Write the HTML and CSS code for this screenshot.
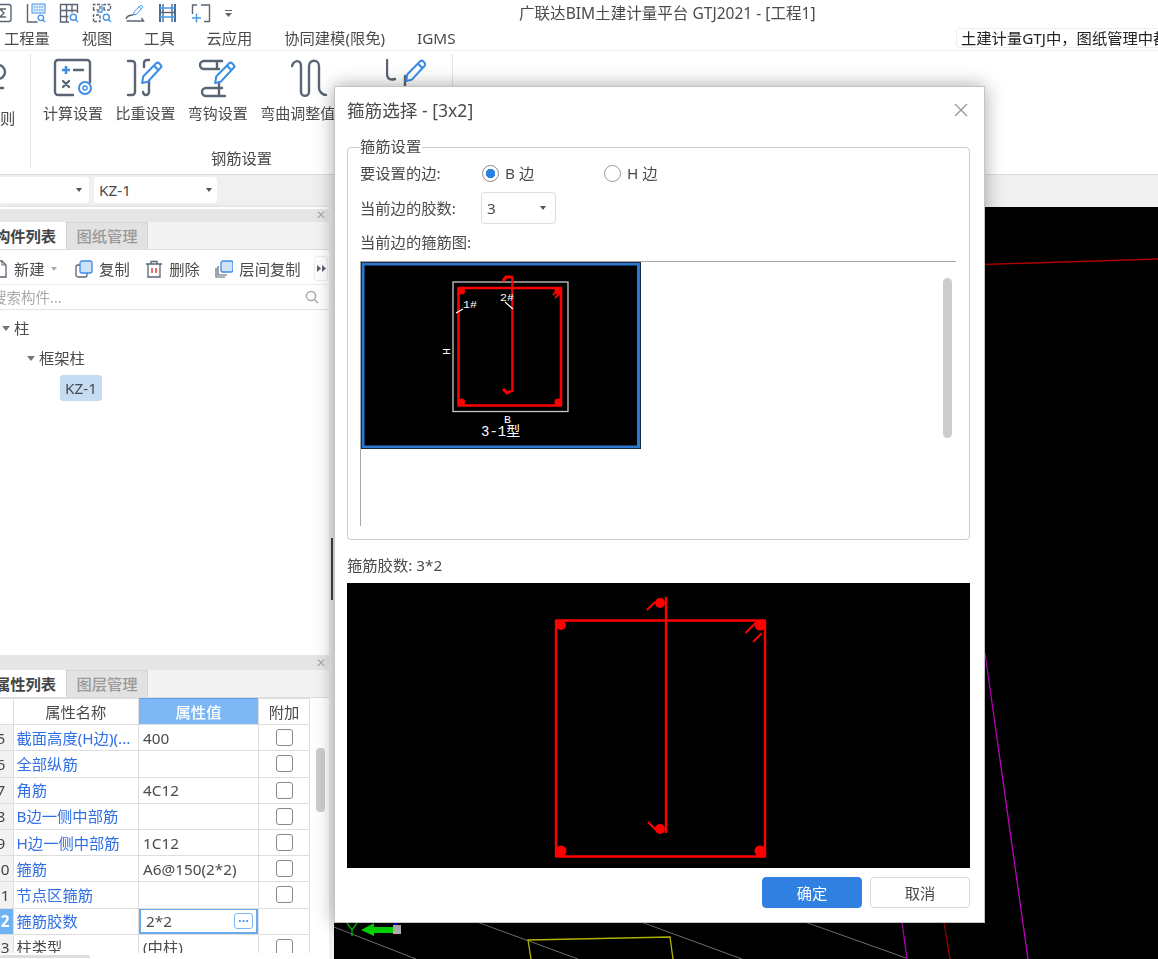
FILE: index.html
```html
<!DOCTYPE html>
<html lang="zh-CN">
<head>
<meta charset="utf-8">
<title>广联达BIM土建计量平台 GTJ2021</title>
<link rel="stylesheet" href="styles.css">
</head>
<body>
<svg class="defs" width="0" height="0" aria-hidden="true">
  <symbol id="pencil" viewBox="0 0 24 24"><path d="M3 22l1.200-6.500L16.500 3.200a2 2 0 0 1 2.800 0l1.500 1.500a2 2 0 0 1 0 2.800L8.500 20.800zM14.500 5.500l4 4" fill="#fff" stroke="#3b8de6" stroke-width="2" stroke-linejoin="round"/></symbol>
  <symbol id="lens" viewBox="0 0 10 10"><circle cx="4.300" cy="4.300" r="3" fill="#fff" stroke="#4a98e6" stroke-width="1.500"/><path d="M6.500 6.500L9 9" stroke="#4a98e6" stroke-width="1.500"/></symbol>
</svg>
<div class="app">
  <header class="titlebar">
    <div class="quick">
      <svg class="qi" viewBox="0 0 20 20"><rect x="1" y="1.500" width="17" height="17" rx="2" class="ln"/><path d="M13 6H7l4 4-4 4h6" class="ln"/></svg>
      <svg class="qi" viewBox="0 0 20 20"><path d="M1.500 1v18h10" class="ln"/><rect x="6" y="1" width="13" height="9" fill="#dbe9f8" stroke="#4a98e6"/><path d="M8 4h9M8 7h9" stroke="#4a98e6" stroke-dasharray="1.500 1"/><use href="#lens" x="11" y="11" width="9" height="9"/></svg>
      <svg class="qi" viewBox="0 0 20 20"><path d="M10 19H1.500V1.500h17V10M1.500 7.500h17M1.500 13.500h8M7.500 1.500v17M13 1.500v8" class="ln"/><use href="#lens" x="10" y="10" width="10" height="10"/></svg>
      <svg class="qi" viewBox="0 0 20 20"><path d="M1.500 7V1.500H8V7zM12 7V1.500h6.500V7zM1.500 18.500V12H8v6.500z" class="ln" stroke-dasharray="3 1.500"/><path d="M10 1v8H5" stroke="#4a98e6" fill="none" stroke-width="1.300"/><use href="#lens" x="10" y="10" width="10" height="10"/></svg>
      <svg class="qi" viewBox="0 0 20 20"><path d="M1 16c1-3 3-4 7-4M1.500 18h17l-2-3" class="ln"/><use href="#pencil" x="7" y="1" width="12" height="12"/></svg>
      <svg class="qi" viewBox="0 0 20 20"><path d="M2 1v18M17 1v18" stroke="#3c6fa8" stroke-width="2" fill="none"/><path d="M5 1v18M14 1v18" class="ln"/><path d="M2 5h15M2 14h15" stroke="#4a98e6" stroke-width="1.500"/><path d="M2 9.500h15" class="ln"/></svg>
      <svg class="qi" viewBox="0 0 20 20"><path d="M10 2h8.500v16.500H13M1.500 11V2H6" class="ln"/><path d="M1 15h9M5.500 10.500v9" stroke="#4a98e6" stroke-width="1.500"/></svg>
      <svg class="more" viewBox="0 0 9 9"><path d="M1 1.500h7" stroke="#666"/><path d="M1 4h7L4.500 8z" fill="#666"/></svg>
    </div>
    <div class="app-title">广联达BIM土建计量平台 GTJ2021 - [工程1]</div>
  </header>

  <nav class="menubar">
    <span>工程量</span><span>视图</span><span>工具</span><span>云应用</span><span>协同建模(限免)</span><span>IGMS</span>
    <div class="helpbox">土建计量GTJ中，图纸管理中都可以导入哪些类型的图纸</div>
  </nav>

  <section class="ribbon">
    <div class="rgroup rgroup-first"><svg class="rclip" viewBox="0 0 10 40"><circle cx="-2" cy="14" r="7" class="ln2"/><path d="M-2 21v9M-2 30H3" class="ln2"/></svg><span class="rlabel">则</span></div>
    <div class="rgroup rgroup-main">
      <div class="rbtns">
        <div class="rbtn">
          <svg class="ricon" viewBox="0 0 40 40"><path d="M20 37H5a3 3 0 0 1-3-3V5a3 3 0 0 1 3-3h29a3 3 0 0 1 3 3v19" class="ln2"/><path d="M9 12h8M13 8v8" stroke="#3b8de6" stroke-width="2.500"/><path d="M21 12h9" class="ln2"/><path d="M10 23l6 6M16 23l-6 6" class="ln2"/><circle cx="32" cy="30" r="6" fill="#fff" stroke="#3b8de6" stroke-width="2"/><circle cx="32" cy="30" r="2" fill="none" stroke="#3b8de6" stroke-width="1.500"/></svg>
          <span class="rlabel">计算设置</span>
        </div>
        <div class="rbtn">
          <svg class="ricon" viewBox="0 0 40 40"><path d="M3 3h4a3 3 0 0 1 3 3v28a3 3 0 0 1-3 3H3M24 2h-2a3 3 0 0 0-3 3v4M24 20v14a3 3 0 0 1-6 0" class="ln2"/><use href="#pencil" x="14" y="2" width="25" height="25"/></svg>
          <span class="rlabel">比重设置</span>
        </div>
        <div class="rbtn">
          <svg class="ricon" viewBox="0 0 40 40"><path d="M24 3H6a3 3 0 0 0 0 8h15M19 3v8M24 30H8a4 4 0 0 0 0 8h19M21 26v12" class="ln2"/><use href="#pencil" x="14" y="2" width="25" height="25"/></svg>
          <span class="rlabel">弯钩设置</span>
        </div>
        <div class="rbtn rbtn-wave">
          <svg class="ricon ricon-wave" viewBox="0 0 40 40"><path d="M1 8c2-6 9-7 9 0v26c0 5 8 5 8 0V8c0-7 10-7 10 0v22c0 4 4 7 7 7" class="ln2"/></svg>
          <span class="rlabel">弯曲调整值</span>
        </div>
        <div class="rbtn rbtn-last">
          <svg class="ricon" viewBox="0 0 40 40"><path d="M1 2v14c0 6 5 6 8 5M19 18v18" class="ln2"/><use href="#pencil" x="17" y="0" width="25" height="25"/></svg>
        </div>
      </div>
      <div class="gname">钢筋设置</div>
    </div>
  </section>

  <div class="selbar">
    <div class="sel sel-a"><i class="caret"></i></div>
    <div class="sel sel-b">KZ-1<i class="caret"></i></div>
  </div>

  <main class="workspace">
    <aside class="leftcol">
      <section class="panel panel-top">
        <div class="strip"><span class="xmark">✕</span></div>
        <div class="tabs"><div class="tab tab-on">构件列表</div><div class="tab">图纸管理</div></div>
        <div class="toolbar">
          <div class="tool"><svg class="ticon" viewBox="0 0 18 18"><path d="M3 1h9l4 4v12H3z" fill="#fff" stroke="#5a6473" stroke-width="1.300"/><path d="M12 1v4h4" fill="none" stroke="#5a6473"/></svg><span>新建</span><i class="caret caret-light"></i></div>
          <div class="tool"><svg class="ticon" viewBox="0 0 18 18"><rect x="1" y="5" width="11" height="12" rx="2" fill="#fff" stroke="#5a6473" stroke-width="1.300"/><rect x="5" y="1" width="12" height="12" rx="2" fill="#cfe2f8" stroke="#3b8de6" stroke-width="1.300"/></svg><span>复制</span></div>
          <div class="tool"><svg class="ticon" viewBox="0 0 18 18"><path d="M1 4h16M6 4V1.500h6V4M3 4v13h12V4" fill="none" stroke="#5a6473" stroke-width="1.300"/><path d="M7 8v5M11 8v5" stroke="#e0413c" stroke-width="1.500"/></svg><span>删除</span></div>
          <div class="tool"><svg class="ticon" viewBox="0 0 18 18"><path d="M1 8v9h9M3 6v9h9" fill="none" stroke="#5a6473" stroke-width="1.200"/><rect x="6" y="1" width="12" height="11" rx="2" fill="#cfe2f8" stroke="#3b8de6" stroke-width="1.300"/></svg><span>层间复制</span></div>
          <div class="expand"><svg viewBox="0 0 9 9" width="9" height="9"><path d="M0 1l4 3.500L0 8zM5 1l4 3.500L5 8z" fill="#5a6473"/></svg></div>
        </div>
        <div class="search"><span>搜索构件...</span><svg viewBox="0 0 14 14" width="14" height="14"><circle cx="6" cy="6" r="4.600" fill="none" stroke="#aaa" stroke-width="1.500"/><path d="M9.500 9.500L13 13" stroke="#aaa" stroke-width="1.500"/></svg></div>
        <div class="tree">
          <div class="node node-1"><i class="tri"></i>柱</div>
          <div class="node node-2"><i class="tri"></i>框架柱</div>
          <div class="node node-3"><span class="chip">KZ-1</span></div>
        </div>
      </section>

      <section class="panel panel-bottom">
        <div class="strip"><span class="xmark">✕</span></div>
        <div class="tabs"><div class="tab tab-on">属性列表</div><div class="tab">图层管理</div></div>
        <div class="tablewrap">
          <table class="props">
            <colgroup><col class="c-n"><col class="c-name"><col class="c-val"><col class="c-add"></colgroup>
            <thead><tr><th></th><th>属性名称</th><th class="th-val">属性值</th><th>附加</th></tr></thead>
            <tbody>
              <tr><td class="num">5</td><td class="pn">截面高度(H边)(...</td><td class="pv">400</td><td class="ck"><i class="box"></i></td></tr>
              <tr><td class="num">6</td><td class="pn">全部纵筋</td><td class="pv"></td><td class="ck"><i class="box"></i></td></tr>
              <tr><td class="num">7</td><td class="pn">角筋</td><td class="pv">4C12</td><td class="ck"><i class="box"></i></td></tr>
              <tr><td class="num">8</td><td class="pn">B边一侧中部筋</td><td class="pv"></td><td class="ck"><i class="box"></i></td></tr>
              <tr><td class="num">9</td><td class="pn">H边一侧中部筋</td><td class="pv">1C12</td><td class="ck"><i class="box"></i></td></tr>
              <tr><td class="num">10</td><td class="pn">箍筋</td><td class="pv">A6@150(2*2)</td><td class="ck"><i class="box"></i></td></tr>
              <tr><td class="num">11</td><td class="pn">节点区箍筋</td><td class="pv"></td><td class="ck"><i class="box"></i></td></tr>
              <tr><td class="num num-on">12</td><td class="pn">箍筋胶数</td><td class="pv pv-edit"><div class="editor"><span>2*2</span><b class="dots">···</b></div></td><td class="ck"></td></tr>
              <tr><td class="num">13</td><td class="pn pn-dark">柱类型</td><td class="pv">(中柱)</td><td class="ck"><i class="box"></i></td></tr>
            </tbody>
          </table>
          <div class="vscroll"><div class="vthumb"></div></div>
        </div>
        <div class="hscroll"></div>
      </section>
    </aside>

    <div class="gutter"><div class="handle"></div></div>

    <div class="canvas">
      <svg class="cad" viewBox="334 207 824 752" width="824" height="752">
        <path d="M984 264.500L1158 259" stroke="#b00000" stroke-width="1.300"/>
        <path d="M985 653L1028 959" stroke="#c000c0" stroke-width="1.300"/>
        <path d="M902 922L907 959" stroke="#b000b0" stroke-width="1.300"/>
        <path d="M944 922L950 959" stroke="#990000" stroke-width="1.300"/>
        <path d="M334 927L416 959M477 922L578 959M641 922L742 959M805 922L906 958" stroke="#707070"/>
        <path d="M531 959L528 940L670 937L673 959" fill="none" stroke="#b4b400" stroke-width="1.300"/>
        <path d="M347 923L352 930L357 923M352 930V936" fill="none" stroke="#00c800" stroke-width="1.300"/>
        <path d="M361 930L374 923V927H393V933H374V936z" fill="#00e000"/>
        <rect x="393" y="925" width="8" height="9" fill="#bbb"/>
        <rect x="394" y="922" width="4" height="3" fill="#0000d0"/>
      </svg>
    </div>
  </main>
</div>

<div class="dialog">
  <div class="dlg-head"><span class="dlg-title">箍筋选择 - [3x2]</span><svg class="dlg-x" viewBox="0 0 14 14" width="14" height="14"><path d="M1 1l12 12M13 1L1 13" stroke="#999" stroke-width="1.400"/></svg></div>
  <div class="group">
    <div class="legend">箍筋设置</div>
    <div class="frow frow-1">
      <span class="flabel">要设置的边:</span>
      <span class="radio radio-on"></span><span class="rtext">B 边</span>
      <span class="radio radio-2"></span><span class="rtext">H 边</span>
    </div>
    <div class="frow frow-2">
      <span class="flabel">当前边的胶数:</span>
      <div class="dsel">3<i class="caret"></i></div>
    </div>
    <div class="frow frow-3"><span>当前边的箍筋图:</span></div>
    <div class="thumbs">
      <div class="thumb">
        <svg viewBox="361 262 280 187" width="280" height="187">
          <rect x="363" y="264" width="275.500" height="183" fill="#000" stroke="#2d78d0" stroke-width="3"/>
          <rect x="361.500" y="262.500" width="279" height="186" fill="none" stroke="#1c2a40"/>
          <rect x="453" y="282" width="115" height="129.500" fill="none" stroke="#c8c8c8" stroke-width="1.300"/>
          <rect x="458.500" y="288" width="102.500" height="117.500" fill="none" stroke="#f00" stroke-width="2.600" stroke-linejoin="round"/>
          <path d="M512.300 276V392" stroke="#f00" stroke-width="2.200"/>
          <path d="M512 277l-6 0-3 4M511 391l-4 2-4-4" fill="none" stroke="#f00" stroke-width="3"/>
          <circle cx="461.500" cy="291" r="3.500" fill="#f00"/><circle cx="558" cy="291" r="3.500" fill="#f00"/><circle cx="461.500" cy="402" r="3.500" fill="#f00"/><circle cx="558" cy="402" r="3.500" fill="#f00"/>
          <path d="M553 295l6-6M555 298l5-5" stroke="#f00" stroke-width="1.800"/>
          <path d="M456 313l7-4M505 302l8 7" stroke="#fff" stroke-width="1.200"/>
          <text x="463" y="308" class="cadt">1#</text>
          <text x="500" y="301" class="cadt">2#</text>
          <text x="0" y="0" class="cadt" transform="translate(443 348) rotate(90)">H</text>
          <text x="504" y="423" class="cadt">B</text>
          <text x="481" y="436" class="cadm">3-1型</text>
        </svg>
      </div>
      <div class="lscroll"></div>
    </div>
  </div>
  <div class="caption">箍筋胶数: 3*2</div>
  <svg class="preview" viewBox="347 583 623 285" width="623" height="285">
    <rect x="347" y="583" width="623" height="285" fill="#000"/>
    <rect x="556" y="620.500" width="209" height="236" fill="none" stroke="#f00" stroke-width="2.400" stroke-linejoin="round"/>
    <path d="M666 597V833" stroke="#f00" stroke-width="2.400"/>
    <circle cx="561" cy="625" r="5" fill="#f00"/><circle cx="760" cy="625" r="5.500" fill="#f00"/><circle cx="561" cy="851" r="5.500" fill="#f00"/><circle cx="760" cy="851" r="5.500" fill="#f00"/>
    <circle cx="660" cy="603" r="5" fill="#f00"/><circle cx="660" cy="829" r="5" fill="#f00"/>
    <path d="M647 610l8-8M648 822l8 8M745.500 633l12-12M753 642l9-9" stroke="#f00" stroke-width="2"/>
  </svg>
  <div class="footer"><button class="btn btn-primary">确定</button><button class="btn">取消</button></div>
</div>
</body>
</html>
```
FILE: styles.css
```css
* { box-sizing: border-box; }
html, body { margin: 0; padding: 0; }
body {
  position: relative;
  width: 1158px;
  height: 959px;
  overflow: hidden;
  background: #fff;
  color: #4b4b4b;
  font: 15.300px/20px "Noto Sans", "Noto Sans CJK SC", sans-serif;
  filter: blur(.35px);
}
.defs { position: absolute; }
.ln { fill: none; stroke: #5a6473; stroke-width: 1.400; }
.ln2 { fill: none; stroke: #5a6473; stroke-width: 2.400; stroke-linecap: round; }
i { display: block; font-style: normal; }

.app { display: flex; flex-direction: column; height: 959px; }

.titlebar { position: relative; flex: none; height: 26px; display: flex; align-items: center; }
.quick { display: flex; align-items: center; gap: 13px; margin-left: -7px; }
.qi { width: 20px; height: 20px; flex: none; }
.more { width: 9px; height: 9px; flex: none; }
.app-title { position: absolute; left: 519px; top: 3px; font-size: 15.550px; white-space: nowrap; }

.menubar {
  flex: none; height: 25px; padding-left: 4px; display: flex; align-items: center; gap: 31.800px;
  border-bottom: 1px solid #eee; position: relative; white-space: nowrap; overflow: hidden;
}
.helpbox {
  position: absolute; left: 956px; top: 2px; width: 220px; height: 20px;
  border: 1px solid #eee; border-radius: 3px; padding-left: 4px; color: #222; line-height: 19px; overflow: hidden;
}

.ribbon { flex: none; height: 123px; display: flex; }
.rgroup { position: relative; margin: 3px 0 6px; }
.rgroup-first { width: 31px; border-right: 1px solid #e4e4e4; overflow: hidden; }
.rclip { position: absolute; left: 0; top: 4px; width: 10px; height: 40px; }
.rgroup-first .rlabel { position: absolute; left: 0; top: 49px; }
.rgroup-main { width: 422px; border-right: 1px solid #e4e4e4; display: flex; flex-direction: column; justify-content: space-between; }
.rbtns { display: flex; padding: 4px 0 0 5.800px; }
.rbtn { display: flex; flex-direction: column; align-items: center; padding: 0 6.200px; flex: none; font-size: 15px; }
.rbtn-last { width: 126px; padding: 0; }
.ricon { width: 40px; height: 40px; flex: none; }
.ricon-wave { margin-left: 26px; }
.rbtn-last .ricon { margin-left: 4px; }
.rlabel { display: block; margin-top: 5px; white-space: nowrap; }
.gname { text-align: center; line-height: 20px; margin-bottom: 0; }

.selbar {
  flex: none; height: 33px; background: #f0f0f0; border-top: 1px solid #ddd;
  display: flex; align-items: center; gap: 5px; padding-bottom: 3px;
}
.sel { position: relative; height: 26px; background: #fff; border-radius: 3px; line-height: 26px; padding-left: 5px; }
.sel-a { width: 100px; margin-left: -11px; }
.sel-b { width: 123px; }
.caret {
  position: absolute; right: 5px; top: 50%; margin-top: -2px; width: 0; height: 0;
  border-left: 3.500px solid transparent; border-right: 3.500px solid transparent; border-top: 4px solid #555;
}
.sel-a .caret { right: 7px; }

.workspace { flex: 1; display: flex; min-height: 0; }
.leftcol { flex: none; width: 329px; display: flex; flex-direction: column; background: #fff; box-shadow: 1px 0 3px rgba(0,0,0,.15); overflow: hidden; }
.gutter { flex: none; width: 5px; background: #f0f0f0; }
.handle { width: 2px; height: 62px; margin: 331px 0 0 2px; background: #444; }
.canvas { flex: 1; background: #000; position: relative; overflow: hidden; }
.cad { display: block; }

.panel { flex: none; display: flex; flex-direction: column; overflow: hidden; }
.panel-top { height: 443px; padding-top: 2px; }
.panel-bottom { height: 309px; padding-top: 5px; }
.strip { flex: none; height: 13px; background: #e6e6e6; position: relative; }
.panel-bottom .strip { height: 15px; }
.xmark { position: absolute; right: 3px; top: -4px; font-size: 12px; color: #aaa; }
.panel-bottom .xmark { top: -2px; }
.tabs { flex: none; height: 28px; display: flex; background: #f3f3f3; border-bottom: 1px solid #ddd; }
.tab {
  width: 82px; text-align: center; line-height: 27px; color: #999; background: #e2e2e2;
  border: 1px solid #d4d4d4; border-bottom: 0; font-weight: 500;
}
.tab-on { width: 81px; margin-left: -15px; background: #fff; color: #444; border-color: #fff; font-weight: 700; }

.toolbar { flex: none; height: 35px; display: flex; align-items: center; gap: 15.500px; margin-left: -10px; padding-top: 3px; border-bottom: 1px solid #eee; white-space: nowrap; }
.tool { display: flex; align-items: center; gap: 6px; flex: none; position: relative; }
.ticon { width: 18px; height: 18px; flex: none; }
.caret-light { position: static; margin: 0 3px 0 0; border-top-color: #aaa; width: 0; }
.expand {
  flex: none; margin-left: -2px; width: 14px; height: 25px; border: 1px solid #eee; border-radius: 3px;
  display: flex; align-items: center; justify-content: center;
}
.search {
  flex: none; height: 25px; margin-left: -8px; padding-right: 10px; display: flex; align-items: center;
  justify-content: space-between; color: #aaa; border-bottom: 1px solid #e4e4e4; font-size: 14.500px;
}
.tree { padding-top: 3px; flex: 1; }
.node { height: 30px; display: flex; align-items: center; gap: 4px; }
.node-1 { padding-left: 2px; }
.node-2 { padding-left: 27px; }
.node-3 { padding-left: 60px; height: 28px; padding-top: 1px; }
.tri { width: 0; height: 0; border-left: 4px solid transparent; border-right: 4px solid transparent; border-top: 5px solid #777; }
.chip { display: block; padding: 3px 5px; height: 26px; background: #c5dcf2; border-radius: 3px; }

.tablewrap { flex: none; height: 255px; display: flex; overflow: hidden; }
.props { flex: none; width: 321px; margin-left: -12px; table-layout: fixed; border-collapse: collapse; align-self: flex-start; }
.c-n { width: 24.500px; } .c-name { width: 125.500px; } .c-val { width: 120px; } .c-add { width: 51px; }
.props th, .props td { height: 26.200px; padding: 0; border: 1px solid #dedede; font-weight: 400; white-space: nowrap; overflow: hidden; }
.props th { text-align: center; }
.props .th-val { background: #7db8f5; color: #fff; border-top: 1px solid #5ea4ec; font-weight: 500; }
.num { text-align: center; background: #f2f2f2; color: #444; }
.props .num-on { background: #6fb3f5; color: #fff; font-weight: 700; }
.pn { padding-left: 3px !important; color: #2f6fe4; }
.pn-dark { color: #4b4b4b; }
.pv { padding-left: 4px !important; }
.props .pv-edit { padding: 0 !important; }
.editor {
  height: 26px; margin: -1px 0; border: 2px solid #6aa9ec; padding: 0 3px 0 5px;
  display: flex; align-items: center; justify-content: space-between;
}
.dots {
  display: block; width: 19px; height: 16px; border: 1px solid #7db8f5; border-radius: 3px;
  font-size: 13px; line-height: 12px; text-align: center; color: #4a98e6; font-weight: 700;
}
.ck { vertical-align: middle; }
.box { width: 17px; height: 17px; margin: 0 auto; border: 1px solid #888; border-radius: 3px; }
.vscroll { flex: 1; padding: 50px 0 0 6px; }
.vthumb { width: 9px; height: 64px; background: #ccc; border-radius: 4px; }
.hscroll { width: 90px; height: 3px; margin-top: 2px; background: #ddd; border-radius: 2px; }

.dialog {
  position: absolute; left: 334px; top: 86px; width: 651px; height: 837px;
  background: #fff; border: 1px solid #c4c4c4; box-shadow: 0 0 18px rgba(0,0,0,.35);
  padding: 0 14px 0 12px; display: flex; flex-direction: column;
}
.dlg-head { flex: none; height: 47px; display: flex; align-items: center; justify-content: space-between; padding: 0 2px 1px 0; }
.dlg-title { font-size: 17.600px; }
.group { flex: none; height: 393px; margin-top: 13px; border: 1px solid #ccc; border-radius: 4px; padding: 0 13px 0 12px; }
.legend { margin-top: -12px; height: 22px; width: fit-content; padding: 0 1px 0 0; background: #fff; }
.frow { display: flex; align-items: center; }
.frow-1 { height: 30px; }
.flabel { width: 122px; flex: none; }
.radio { width: 17px; height: 17px; flex: none; border: 1px solid #999; border-radius: 50%; background: #fff; }
.radio-on { border: 1px solid #888; background: radial-gradient(circle, #2d7fe0 0 4.500px, #fff 5px); }
.radio-2 { margin-left: 69px; }
.rtext { margin-left: 6px; width: 30px; white-space: nowrap; }
.frow-2 { height: 32px; margin-top: 4px; }
.dsel { position: relative; width: 75px; height: 32px; margin-left: -1px; border: 1px solid #ddd; border-radius: 4px; padding-left: 5px; line-height: 30px; }
.dsel .caret { right: 9px; border-left-width: 3px; border-right-width: 3px; }
.frow-3 { height: 24px; margin-top: 6px; }
.thumbs { margin-top: 7px; height: 265px; border-top: 1px solid #a8a8a8; border-left: 1px solid #a8a8a8; display: flex; justify-content: space-between; align-items: flex-start; }
.thumb { flex: none; height: 187px; }
.thumb svg { display: block; }
.lscroll { width: 9px; height: 160px; margin: 16px 4px 0 0; background: #ccc; border-radius: 5px; }
.cadt { font: 11.500px "Liberation Mono", monospace; fill: #fff; }
.cadm { font: 14px "Liberation Mono", "Noto Sans CJK SC", monospace; fill: #fff; }
.caption { flex: none; height: 24px; margin-top: 13px; line-height: 24px; }
.preview { display: block; flex: none; margin-top: 6px; }
.footer { flex: none; display: flex; justify-content: flex-end; gap: 8px; margin-top: 9px; }
.btn { width: 100px; height: 31px; border: 1px solid #d8d8d8; border-radius: 4px; background: #fff; color: #4b4b4b; font: inherit; padding: 0; }
.btn-primary { background: #2f80e0; border-color: #2f80e0; color: #fff; }
```
